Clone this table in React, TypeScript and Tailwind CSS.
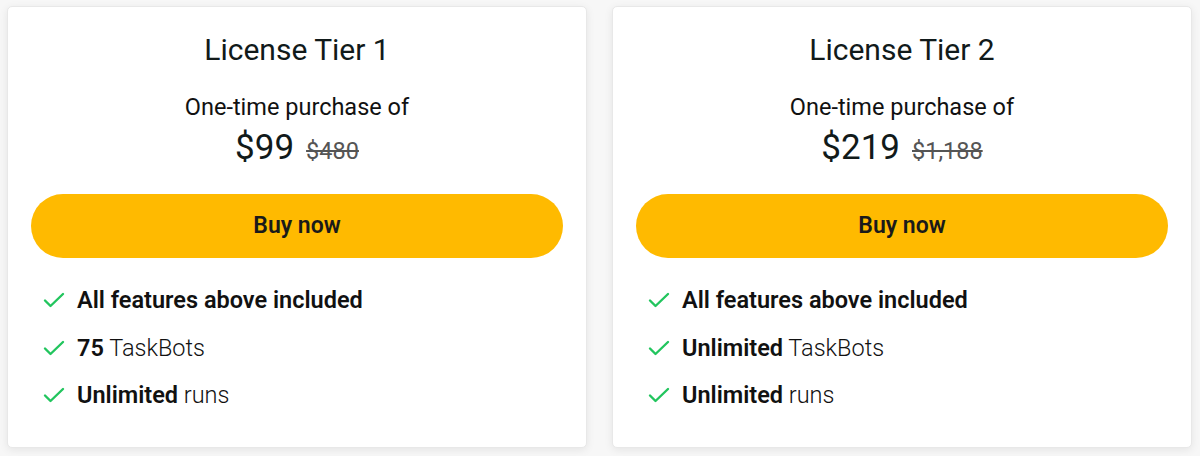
import React from 'react';

type Feature = { strong: string; rest?: string };

const tiers: { title: string; price: string; was: string; features: Feature[] }[] = [
  {
    title: 'License Tier 1',
    price: '$99',
    was: '$480',
    features: [
      { strong: 'All features above included' },
      { strong: '75', rest: 'TaskBots' },
      { strong: 'Unlimited', rest: 'runs' },
    ],
  },
  {
    title: 'License Tier 2',
    price: '$219',
    was: '$1,188',
    features: [
      { strong: 'All features above included' },
      { strong: 'Unlimited', rest: 'TaskBots' },
      { strong: 'Unlimited', rest: 'runs' },
    ],
  },
];

const Check = () => (
  <svg width="24" height="24" viewBox="0 0 24 24" fill="none" stroke="#22c55e" strokeWidth="2.4" strokeLinecap="round" strokeLinejoin="round">
    <path d="M3 12.5l5.5 5.5L21 6" />
  </svg>
);

const App = () => {
  return (
    <div className="min-h-[456px] bg-[#f7f7f7] pl-[7px] pr-[8px] pt-[6px] font-['Roboto',sans-serif]">
      <div className="grid grid-cols-2 gap-[25px]">
        {tiers.map((tier) => (
          <div
            key={tier.title}
            className="h-[442px] rounded-[5px] border border-[#e8e8e8] bg-white px-[23px] shadow-[0_2px_8px_rgba(0,0,0,0.08)]"
          >
            <h2 className="pt-[26px] text-center text-[30px] leading-[34px] text-[#111a1a]">{tier.title}</h2>
            <p className="mt-[26px] text-center text-[23.5px] leading-[28px] text-[#111]">
              One-time purchase of
            </p>
            <div className="mt-[7px] flex items-baseline justify-center gap-[12px]">
              <span className="text-[35px] leading-[40px] text-[#111a1a]">{tier.price}</span>
              <span className="text-[23.5px] text-[#555] line-through">{tier.was}</span>
            </div>
            <button className="mt-[25px] h-[64px] w-full rounded-full bg-[#ffba00] text-[23px] font-semibold text-[#1a1a1a]">
              Buy now
            </button>
            <ul className="mt-[28px] space-y-[19.5px] pl-[11px]">
              {tier.features.map((f, i) => (
                <li key={i} className="flex h-[28px] items-center gap-[11px] text-[23.5px] leading-[28px] text-[#111]">
                  <Check />
                  <span>
                    <span className="font-semibold">{f.strong}</span>
                    {f.rest && <span className="font-light"> {f.rest}</span>}
                  </span>
                </li>
              ))}
            </ul>
          </div>
        ))}
      </div>
    </div>
  );
};

export default App;
